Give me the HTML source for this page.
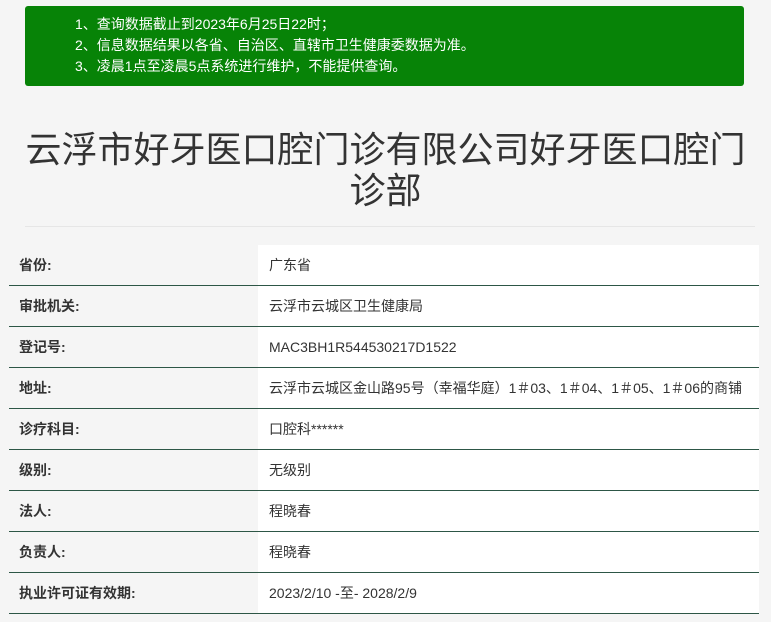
<!DOCTYPE html>
<html><head><meta charset="utf-8"><style>
body{margin:0;background:#f5f5f5;width:771px;height:622px;overflow:hidden;font-family:"Liberation Sans","Noto Sans CJK SC",sans-serif;color:#333}
.notice{position:absolute;left:25px;top:6px;width:719px;height:80px;background:#078307;border-radius:3px;color:#fff;font-size:14px;box-sizing:border-box;padding:8px 0 0 50px;line-height:21px}
h1{position:absolute;left:0;top:129px;width:771px;margin:0;text-align:center;font-weight:normal;font-size:36px;line-height:41px;color:#333;padding:0 18px;box-sizing:border-box}
.hr{position:absolute;left:25px;top:226px;width:730px;height:1px;background:#e6e6e6}
table{position:absolute;left:9px;top:245px;width:750px;border-collapse:collapse;font-size:14px}
td{height:40px;border-bottom:1.5px solid #2d5646;padding:0;vertical-align:middle}
td.l{width:249px;background:#f5f5f5;font-weight:bold;padding-left:10px;box-sizing:border-box}
td.v{background:#fff;padding-left:11px;white-space:nowrap}
</style></head><body>
<div class="notice">1、查询数据截止到2023年6月25日22时；<br>2、信息数据结果以各省、自治区、直辖市卫生健康委数据为准。<br>3、凌晨1点至凌晨5点系统进行维护，不能提供查询。</div>
<h1>云浮市好牙医口腔门诊有限公司好牙医口腔门诊部</h1>
<div class="hr"></div>
<table>
<tr><td class="l">省份:</td><td class="v">广东省</td></tr>
<tr><td class="l">审批机关:</td><td class="v">云浮市云城区卫生健康局</td></tr>
<tr><td class="l">登记号:</td><td class="v">MAC3BH1R544530217D1522</td></tr>
<tr><td class="l">地址:</td><td class="v">云浮市云城区金山路95号（幸福华庭）1＃03、1＃04、1＃05、1＃06的商铺</td></tr>
<tr><td class="l">诊疗科目:</td><td class="v">口腔科******</td></tr>
<tr><td class="l">级别:</td><td class="v">无级别</td></tr>
<tr><td class="l">法人:</td><td class="v">程晓春</td></tr>
<tr><td class="l">负责人:</td><td class="v">程晓春</td></tr>
<tr><td class="l">执业许可证有效期:</td><td class="v">2023/2/10 -至- 2028/2/9</td></tr>
</table>
</body></html>
